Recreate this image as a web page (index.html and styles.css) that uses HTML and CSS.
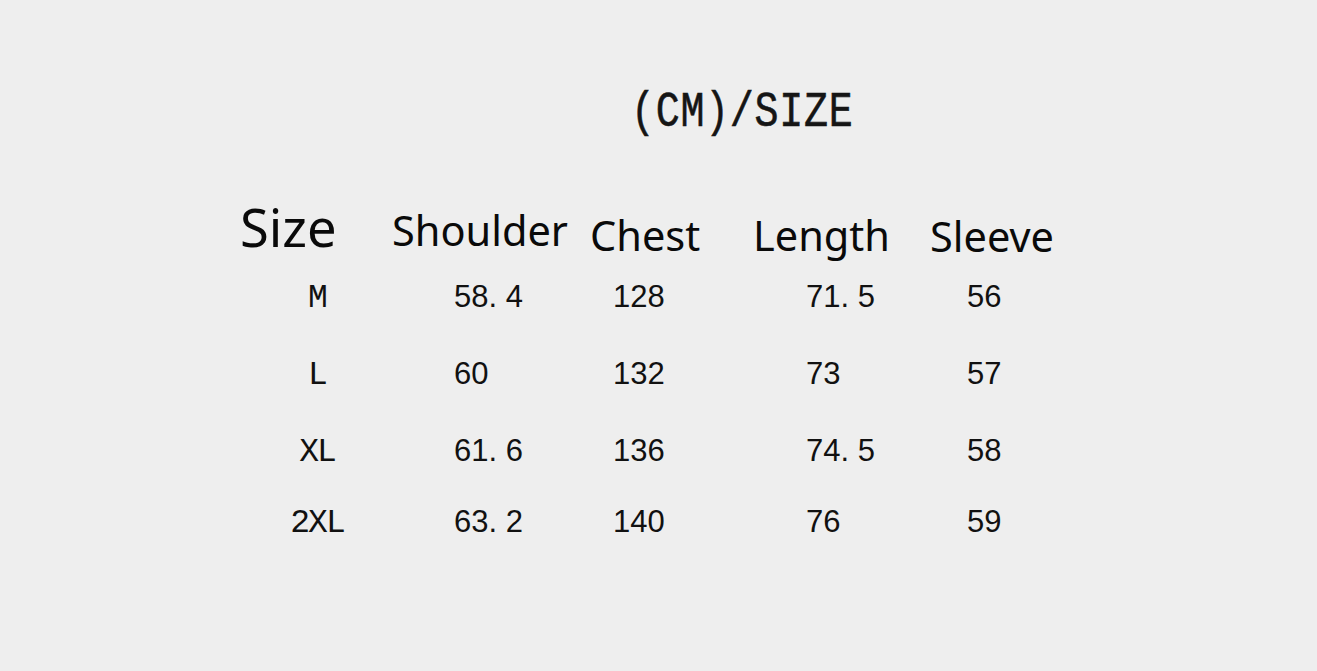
FILE: index.html
```html
<!DOCTYPE html>
<html lang="en">
<head>
<meta charset="utf-8">
<title>Size chart</title>
<link rel="stylesheet" href="styles.css">
</head>
<body>
<main class="page">
  <h1 class="title"><span class="title-text">(CM)/SIZE</span></h1>
  <section class="chart">
    <div class="head">
      <span class="h h-size">Size</span>
      <span class="h h-shoulder">Shoulder</span>
      <span class="h h-chest">Chest</span>
      <span class="h h-length">Length</span>
      <span class="h h-sleeve">Sleeve</span>
    </div>
    <div class="rows">
      <div class="row">
        <span class="c c-size">M</span>
        <span class="c">58<span class="dp">.</span>4</span>
        <span class="c">128</span>
        <span class="c">71<span class="dp">.</span>5</span>
        <span class="c">56</span>
      </div>
      <div class="row">
        <span class="c c-size">L</span>
        <span class="c">60</span>
        <span class="c">132</span>
        <span class="c">73</span>
        <span class="c">57</span>
      </div>
      <div class="row">
        <span class="c c-size">XL</span>
        <span class="c">61<span class="dp">.</span>6</span>
        <span class="c">136</span>
        <span class="c">74<span class="dp">.</span>5</span>
        <span class="c">58</span>
      </div>
      <div class="row row-last">
        <span class="c c-size">2XL</span>
        <span class="c">63<span class="dp">.</span>2</span>
        <span class="c">140</span>
        <span class="c">76</span>
        <span class="c">59</span>
      </div>
    </div>
  </section>
</main>
</body>
</html>
```

FILE: styles.css
```css
html, body {
  margin: 0;
  padding: 0;
  background: #eeeeee;
  color: #111111;
}

.page {
  width: 1317px;
  height: 671px;
  padding-top: 92px;
  box-sizing: border-box;
  overflow: hidden;
}

.title {
  margin: 0 0 0 631px;
  height: 44px;
  font-family: "Liberation Mono", "DejaVu Sans Mono", monospace;
  font-weight: normal;
  font-size: 40px;
  line-height: 44px;
  letter-spacing: 0.7px;
  color: #151515;
}

.title-text {
  display: inline-block;
  transform: scaleY(1.24);
  transform-origin: 50% 55%;
  -webkit-text-stroke: 0.5px #151515;
}

.chart {
  margin-top: 66px;
  padding-left: 240px;
}

.head {
  display: grid;
  grid-template-columns: 152px 198px 163px 177px auto;
  align-items: start;
  font-family: "Noto Sans", "Open Sans", sans-serif;
  font-size: 41.5px;
  line-height: 1;
  color: #0a0a0a;
}

.h-size { font-size: 52.5px; margin-top: -1px; }
.h-shoulder { margin-top: 8px; }
.h-chest { margin-top: 13px; }
.h-length { margin-top: 13px; }
.h-sleeve { margin-top: 14px; }

.rows {
  margin-top: 23px;
  display: flex;
  flex-direction: column;
  gap: 44px;
}

.row {
  display: grid;
  grid-template-columns: 214px 159px 193px 161px auto;
  align-items: baseline;
  font-family: "Liberation Sans", Arial, sans-serif;
  font-size: 31px;
  line-height: 31px;
}

.row-last { margin-top: -6px; }

.c-size {
  font-family: "Liberation Mono", "DejaVu Sans Mono", monospace;
  font-size: 33px;
  letter-spacing: -2px;
  text-align: center;
  padding-right: 60px;
}

.dp {
  margin-right: 8.6px;
}
```
